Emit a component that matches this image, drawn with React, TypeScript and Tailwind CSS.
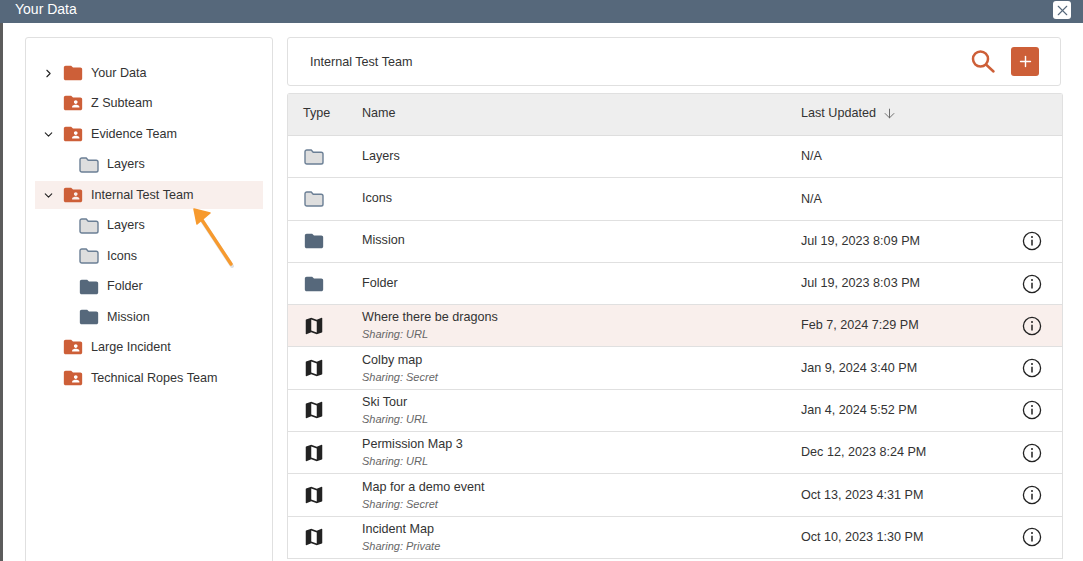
import { ArrowDown, ChevronDown, ChevronRight, Plus, X } from 'lucide-react';
import { MdFolder, MdFolderShared, MdMap } from 'react-icons/md';

type TreeItem = {
  label: string;
  kind: 'root' | 'team' | 'empty' | 'solid';
  chevron?: 'right' | 'down';
  active?: boolean;
};

const treeItems: TreeItem[] = [
  { label: 'Your Data', kind: 'root', chevron: 'right' },
  { label: 'Z Subteam', kind: 'team' },
  { label: 'Evidence Team', kind: 'team', chevron: 'down' },
  { label: 'Layers', kind: 'empty' },
  { label: 'Internal Test Team', kind: 'team', chevron: 'down', active: true },
  { label: 'Layers', kind: 'empty' },
  { label: 'Icons', kind: 'empty' },
  { label: 'Folder', kind: 'solid' },
  { label: 'Mission', kind: 'solid' },
  { label: 'Large Incident', kind: 'team' },
  { label: 'Technical Ropes Team', kind: 'team' },
];

type Row = {
  name: string;
  sharing?: string;
  updated: string;
  kind: 'empty' | 'solid' | 'map';
  active?: boolean;
};

const rows: Row[] = [
  { name: 'Layers', updated: 'N/A', kind: 'empty' },
  { name: 'Icons', updated: 'N/A', kind: 'empty' },
  { name: 'Mission', updated: 'Jul 19, 2023 8:09 PM', kind: 'solid' },
  { name: 'Folder', updated: 'Jul 19, 2023 8:03 PM', kind: 'solid' },
  { name: 'Where there be dragons', sharing: 'URL', updated: 'Feb 7, 2024 7:29 PM', kind: 'map', active: true },
  { name: 'Colby map', sharing: 'Secret', updated: 'Jan 9, 2024 3:40 PM', kind: 'map' },
  { name: 'Ski Tour', sharing: 'URL', updated: 'Jan 4, 2024 5:52 PM', kind: 'map' },
  { name: 'Permission Map 3', sharing: 'URL', updated: 'Dec 12, 2023 8:24 PM', kind: 'map' },
  { name: 'Map for a demo event', sharing: 'Secret', updated: 'Oct 13, 2023 4:31 PM', kind: 'map' },
  { name: 'Incident Map', sharing: 'Private', updated: 'Oct 10, 2023 1:30 PM', kind: 'map' },
];

function EmptyFolder() {
  return (
    <svg width="20" height="16" viewBox="0 0 20 16" className="ml-px shrink-0">
      <path
        d="M2.8 1h4.4l2 2.2h8c1 0 1.8.8 1.8 1.8v8.2c0 1-.8 1.8-1.8 1.8H2.8c-1 0-1.8-.8-1.8-1.8V2.8C1 1.8 1.8 1 2.8 1z"
        fill="#dedede"
        stroke="#6b7f95"
        strokeWidth="1.4"
      />
    </svg>
  );
}

function SearchIcon() {
  return (
    <svg width="26" height="26" viewBox="0 0 26 26" fill="none" stroke="#cd5f38" strokeWidth="2.5" strokeLinecap="round">
      <circle cx="10.5" cy="10" r="7.5" />
      <path d="M16 15.5 L23.5 22.5" />
    </svg>
  );
}

function InfoIcon() {
  return (
    <svg width="20" height="20" viewBox="0 0 20 20" fill="none" className="shrink-0">
      <circle cx="10" cy="10" r="8.6" stroke="#222222" strokeWidth="1.3" />
      <circle cx="10" cy="6" r="1" fill="#222222" />
      <path d="M10 8.8 V14.6" stroke="#222222" strokeWidth="1.5" />
    </svg>
  );
}

function TypeIcon({ kind }: { kind: TreeItem['kind'] | Row['kind'] }) {
  if (kind === 'root') return <MdFolder size={22} className="-mt-px shrink-0 text-[#cd5f38]" />;
  if (kind === 'team') return <MdFolderShared size={22} className="-mt-px shrink-0 text-[#cd5f38]" />;
  if (kind === 'solid') return <MdFolder size={22} className="shrink-0 text-[#56687b]" />;
  if (kind === 'map') return <MdMap size={22} className="shrink-0 text-[#222222]" />;
  return <EmptyFolder />;
}

export default function App() {
  return (
    <div
      className="relative flex h-[561px] w-[1083px] overflow-hidden bg-white text-[#333333]"
      style={{ fontFamily: '"Liberation Sans", Arial, sans-serif' }}
    >
      <div className="w-[3px] shrink-0 bg-[#5c5c5c]" />

      <div className="flex min-w-0 flex-1 flex-col">
        <header className="-ml-[3px] flex h-[23px] shrink-0 items-start justify-between bg-[#56687b] pl-[15px] pr-[12px]">
          <h1 className="text-[14px] leading-[18px] text-white">Your Data</h1>
          <button className="mt-px flex h-[18px] w-[18px] items-center justify-center rounded-[3px] bg-white text-[#56687b]">
            <X size={17} strokeWidth={1.6} />
          </button>
        </header>

        <main className="flex flex-1 gap-[14px] pl-[22px] pr-[20px] pt-[14px]">
          <aside className="h-[560px] w-[248px] shrink-0 rounded-[3px] border border-[#e0e0e0] px-[9px] pt-[21px]">
            {treeItems.map((item, i) => {
              const child = item.kind === 'empty' || item.kind === 'solid';
              return (
                <div
                  key={i}
                  className={`mb-[2.5px] flex h-[28px] items-center text-[12.6px] ${item.active ? 'bg-[#f9efec]' : ''}`}
                >
                  <span className="flex w-[27px] shrink-0 justify-center">
                    {item.chevron === 'right' && <ChevronRight size={13} strokeWidth={2} className="text-[#222222]" />}
                    {item.chevron === 'down' && <ChevronDown size={13} strokeWidth={2} className="text-[#222222]" />}
                  </span>
                  {child ? (
                    <span className="ml-[16px] flex w-[29px] shrink-0 items-center">
                      <TypeIcon kind={item.kind} />
                    </span>
                  ) : (
                    <span className="flex w-[29px] shrink-0 items-center">
                      <TypeIcon kind={item.kind} />
                    </span>
                  )}
                  <span>{item.label}</span>
                </div>
              );
            })}
          </aside>

          <section className="flex min-w-0 flex-1 flex-col">
            <div className="mr-[2px] flex h-[49px] shrink-0 items-center justify-between rounded-[3px] border border-[#e0e0e0] pl-[22px] pr-[21px]">
              <span className="pt-[1px] text-[12.6px]">Internal Test Team</span>
              <div className="flex items-center gap-[15px]">
                <SearchIcon />
                <button className="flex h-[29px] w-[28px] items-center justify-center rounded-[3px] bg-[#cd5f38] text-white">
                  <Plus size={17} strokeWidth={2} />
                </button>
              </div>
            </div>

            <div className="mt-[7px] rounded-t-[3px] border-x border-t border-[#e0e0e0] text-[12.6px]">
              <div className="flex h-[42px] items-center border-b border-[#dedede] bg-[#eeeeee] pb-[3px] pl-[15px]">
                <span className="w-[59px] shrink-0">Type</span>
                <span className="w-[439px] shrink-0">Name</span>
                <span className="flex items-center gap-[6px]">
                  Last Updated
                  <ArrowDown size={15} strokeWidth={1.5} className="mt-[2px] text-[#666666]" />
                </span>
              </div>
              {rows.map((row) => (
                <div
                  key={row.name}
                  className={`flex h-[42.3px] items-center border-b border-[#e0e0e0] pl-[15px] ${row.active ? 'bg-[#f9efec]' : ''}`}
                >
                  <span className="flex w-[59px] shrink-0 items-center">
                    <TypeIcon kind={row.kind} />
                  </span>
                  <span className="w-[439px] shrink-0">
                    <span className="block pb-[1px] leading-[15px]">{row.name}</span>
                    {row.sharing && (
                      <span className="mt-[2px] block text-[11px] italic leading-[13px] text-[#666666]">
                        Sharing: {row.sharing}
                      </span>
                    )}
                  </span>
                  <span className="w-[221px] shrink-0">{row.updated}</span>
                  {row.updated !== 'N/A' && <InfoIcon />}
                </div>
              ))}
            </div>
          </section>
        </main>
      </div>

      {/* annotation arrow drawn on top of the screenshot */}
      <svg className="pointer-events-none absolute left-[185px] top-[200px]" width="60" height="75" viewBox="0 0 60 75">
        <path d="M47 66 L16 19" stroke="#000000" strokeOpacity="0.12" strokeWidth="4" strokeLinecap="round" />
        <path d="M46 64 L15 17" stroke="#f79a2e" strokeWidth="3.4" strokeLinecap="round" />
        <path d="M9 9 L25 13 L12 24 Z" fill="#f79a2e" stroke="#f79a2e" strokeWidth="1.5" strokeLinejoin="round" />
      </svg>
    </div>
  );
}
